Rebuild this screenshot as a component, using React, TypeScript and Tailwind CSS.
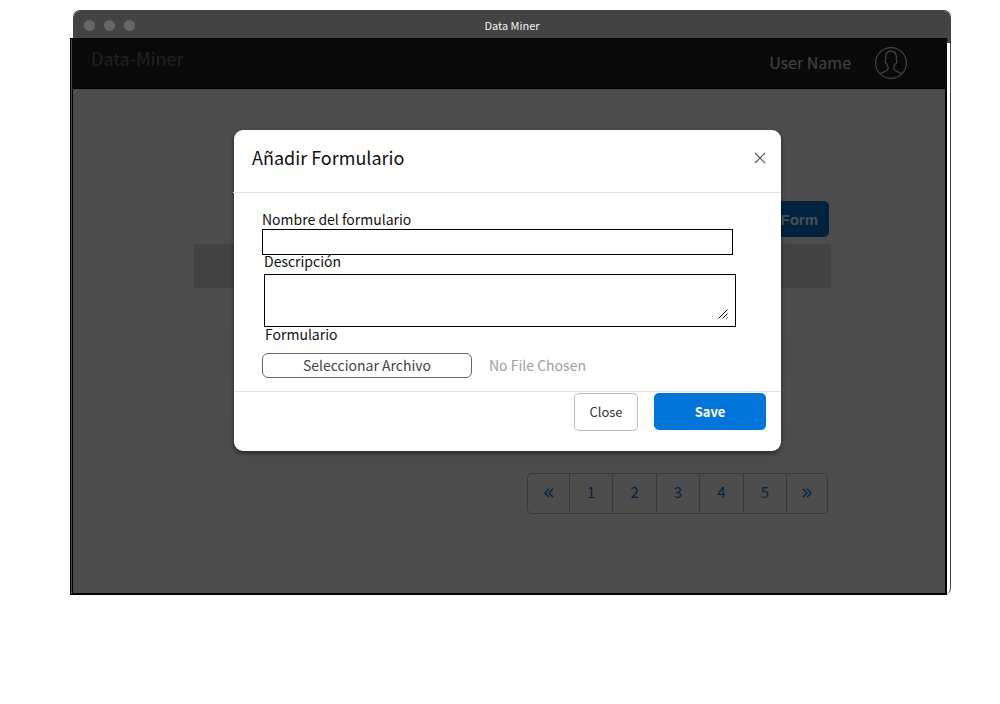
import { useRef } from "react";

const pages = ["1", "2", "3", "4", "5"];
const rows = [0, 1, 2, 3];

function TitleBar() {
  return (
    <div className="flex h-8 items-center rounded-t-md bg-[#434343] px-[10px] pb-1">
      <div className="flex flex-1 gap-[9px]">
        <span className="size-[11px] rounded-full bg-[#666]" />
        <span className="size-[11px] rounded-full bg-[#666]" />
        <span className="size-[11px] rounded-full bg-[#666]" />
      </div>
      <h1 className="text-[11px] leading-4 text-[#f0f0f0]">Data Miner</h1>
      <div className="flex-1" />
    </div>
  );
}

function UserIcon() {
  return (
    <svg viewBox="0 0 32 32" className="size-8" fill="none" stroke="#e0e0e0" strokeWidth="1.2" aria-hidden="true">
      <circle cx="16" cy="16" r="15.4" />
      <path d="M5.500 26.800c2-1.500 4.500-2.300 6-3 1.200-.7 1.700-1.300 1.700-2.700 0-1.400-.8-2.200-1.300-4.100-1.200-.3-1.800-1.900-1.700-3.200.1-.6.300-.9.500-1-.8-5 .8-8.600 5.300-8.600s6.100 3.600 5.300 8.600c.2.1.4.4.5 1 .1 1.300-.5 2.900-1.700 3.200-.5 1.900-1.300 2.700-1.300 4.100 0 1.400.5 2 1.700 2.700 1.500.7 4 1.500 6 3" />
    </svg>
  );
}

function Chevrons({ flip = false }: { flip?: boolean }) {
  return (
    <svg viewBox="0 0 10 10" className={flip ? "size-[10px] rotate-180" : "size-[10px]"} fill="none" stroke="currentColor" strokeWidth="1.3" aria-hidden="true">
      <path d="M5 .8.9 5 5 9.200M9.100.8 5 5l4.100 4.200" />
    </svg>
  );
}

function AddFormDialog() {
  const fileRef = useRef<HTMLInputElement>(null);
  return (
    <div role="dialog" aria-labelledby="dialog-title" className="w-full max-w-[547px] rounded-[9px] bg-white shadow-[0_2px_4px_rgba(0,0,0,0.5)]">
      <header className="-ml-px flex h-[63px] items-start justify-between border-b border-[#e0e0e0] pt-[15px] pr-[15px] pl-[19px]">
        <h2 id="dialog-title" className="text-[18px] leading-6 text-[#111]">Añadir Formulario</h2>
        <button type="button" aria-label="Cerrar" className="mt-[7px] flex size-3 items-center justify-center">
          <svg viewBox="0 0 12 12" className="size-3" stroke="#555" strokeWidth="1.100" aria-hidden="true">
            <path d="M1 1l10 10M11 1 1 11" />
          </svg>
        </button>
      </header>
      <form>
        <div className="flex flex-col border-b border-[#e0e0e0] pt-4 pr-[45px] pb-[13px] pl-7 text-[14px] leading-5 text-[#111]">
          <label htmlFor="form-name">Nombre del formulario</label>
          <input id="form-name" type="text" className="mr-[3px] h-[26px] border border-black bg-white px-2 outline-none" />
          <div className="flex flex-col pl-[2px]">
            <label htmlFor="form-description" className="-mt-1 mb-[3px]">Descripción</label>
            <div className="relative flex">
              <textarea id="form-description" className="h-[53px] w-full resize-none border border-black bg-white px-2 outline-none" />
              <svg viewBox="0 0 10 10" className="pointer-events-none absolute right-2 bottom-2 size-[10px]" stroke="#000" strokeWidth="1" aria-hidden="true">
                <path d="M.5 9.500l9-9M4.500 9.500l5-5M8.500 9.500l1-1" />
              </svg>
            </div>
          </div>
          <label htmlFor="form-file" className="mt-[-3px] mb-[9px] pl-[3px]">Formulario</label>
          <div className="flex items-center gap-[17px]">
            <input ref={fileRef} id="form-file" type="file" className="hidden" />
            <button type="button" onClick={() => fileRef.current?.click()} className="h-[25px] w-[210px] rounded-md border border-[#666] pb-[2px] text-[14px] leading-5 text-[#444]">
              Seleccionar Archivo
            </button>
            <span className="pb-[2px] text-[#a0a0a0]">No File Chosen</span>
          </div>
        </div>
        <footer className="flex items-start justify-end gap-4 pt-px pr-[15px] pb-5">
          <button type="button" className="h-[38px] w-16 rounded-[5px] border border-[#bbb] text-[13px] text-[#333]">Close</button>
          <button type="button" className="h-[37px] w-28 rounded-[5px] bg-[#0275d8] text-[13px] font-bold text-white">Save</button>
        </footer>
      </form>
    </div>
  );
}

export default function App() {
  return (
    <div className="min-h-screen bg-white pt-[10px] pr-[49px] pl-[73px] font-['Noto_Sans_CJK_SC',sans-serif]">
      <div className="rounded-t-[7px] rounded-br-[7px] border border-b-0 border-[#434343]">
        <TitleBar />
        <main className="relative mt-[-5px] mr-[3px] -ml-1 border border-black bg-white pl-px">
          <header className="flex h-[49px] items-start justify-between bg-[#222] pr-[39px] pl-[19px]">
            <span className="pt-[7px] text-[18px] leading-6 text-[#707070]">Data-Miner</span>
            <div className="flex items-center gap-6 pt-2">
              <span className="pb-[2px] text-[16px] leading-6 text-[#e0e0e0]">User Name</span>
              <UserIcon />
            </div>
          </header>
          <section className="flex h-[506px] flex-col border border-black pt-28 pr-[114px] pl-[121px]">
            <button type="button" className="mr-[2px] h-9 w-28 shrink-0 self-end rounded-[5px] bg-[#0275d8] pt-[2px] pr-[11px] text-right font-['Liberation_Sans',sans-serif] text-[15px] font-bold text-white">
              Add Form
            </button>
            <table className="mt-[7px] w-full">
              <thead>
                <tr className="h-11 bg-[#dcdcdc]">
                  <th />
                </tr>
              </thead>
              <tbody>
                {rows.map((row) => (
                  <tr key={row} className="h-11 even:bg-[#fafafa]">
                    <td />
                  </tr>
                ))}
              </tbody>
            </table>
            <nav aria-label="Páginas" className="mt-[9px] mr-[3px] flex h-[41px] w-[301px] self-end divide-x divide-[#bbb] rounded-[5px] border border-[#bbb] text-[15px] text-[#0275d8]">
              <button type="button" aria-label="Anterior" className="flex w-[42px] items-center justify-center pb-[2px]">
                <Chevrons />
              </button>
              {pages.map((page) => (
                <button key={page} type="button" className="flex-1 pb-[2px]">{page}</button>
              ))}
              <button type="button" aria-label="Siguiente" className="flex w-10 items-center justify-center pb-[2px]">
                <Chevrons flip />
              </button>
            </nav>
          </section>
          <div className="absolute inset-0 flex items-start justify-center bg-black/70 pt-[91px] pr-[2px]">
            <AddFormDialog />
          </div>
        </main>
      </div>
    </div>
  );
}
